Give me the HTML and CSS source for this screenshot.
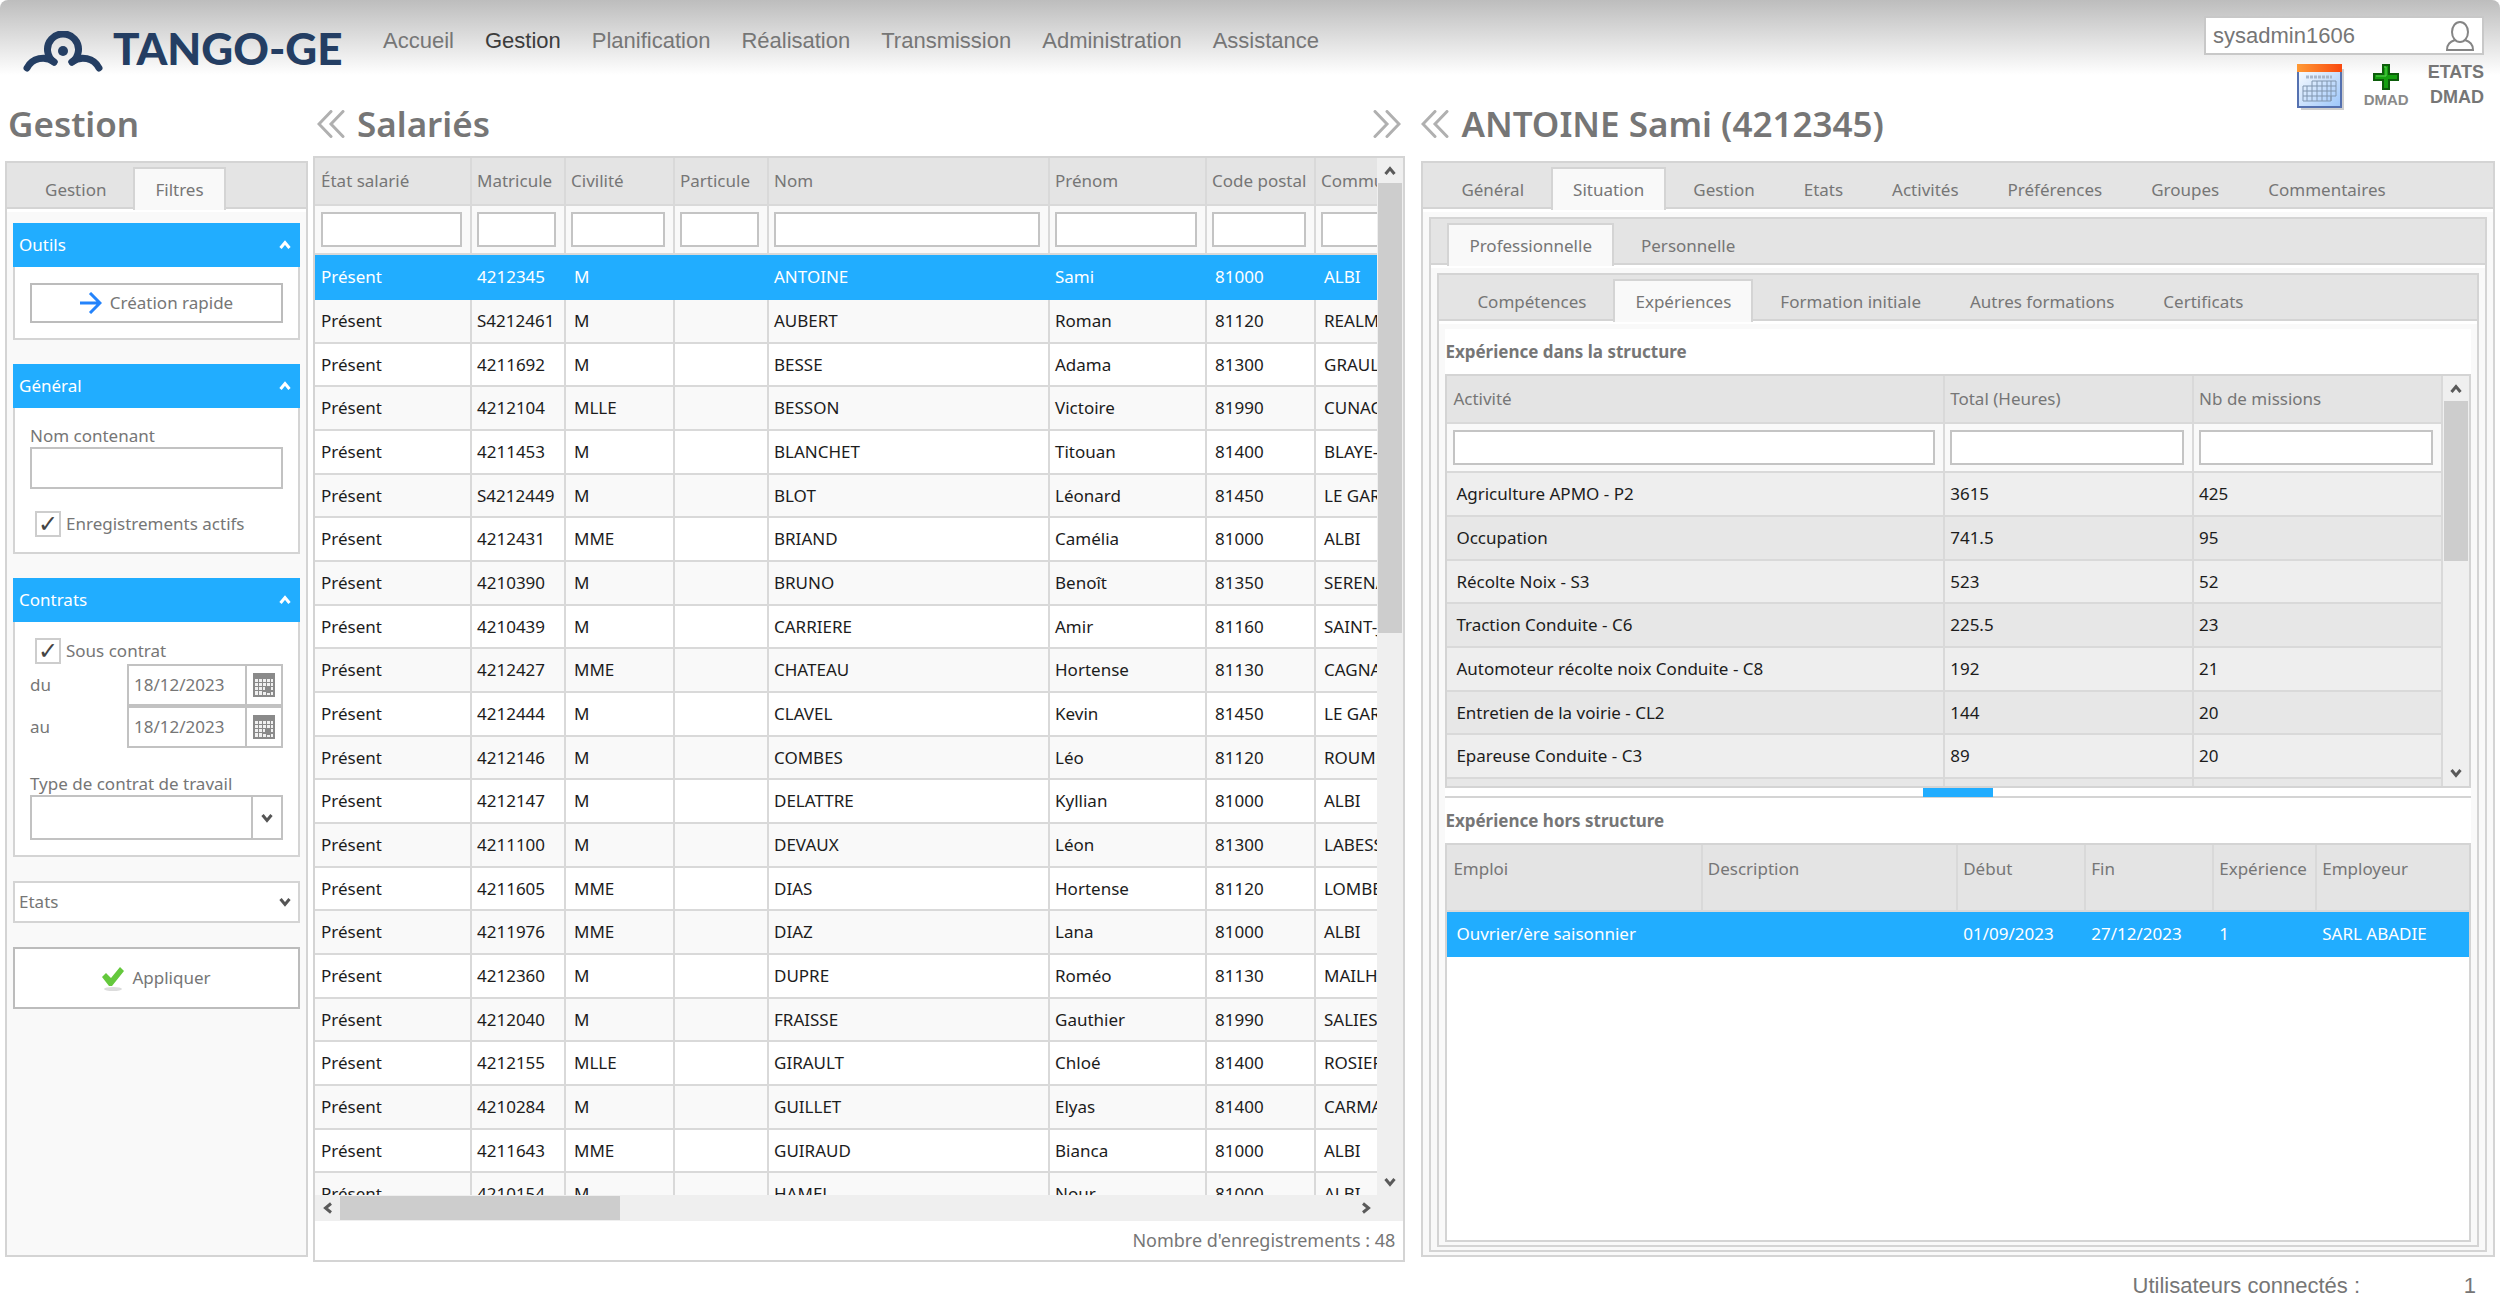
FILE: index.html
```
<!DOCTYPE html>
<html lang="fr">
  <head>
    <meta charset="UTF-8" />
    <meta name="viewport" content="width=device-width, initial-scale=1.0" />
    <title>Tango-GE - Gestion</title>
    <link rel="stylesheet" href="styles.css">
  </head>
  <body>
    <!-- icons used several times -->
    <svg class="sprite" aria-hidden="true">
      <symbol id="up" viewBox="0 0 12 12"><path d="M1.5 9 6 3.5 10.5 9" fill="none" stroke="currentColor" stroke-width="3" /></symbol>
      <symbol id="down" viewBox="0 0 12 12"><path d="M1.5 3 6 8.5 10.5 3" fill="none" stroke="currentColor" stroke-width="3" /></symbol>
      <symbol id="left" viewBox="0 0 12 12"><path d="M9 1.5 3.5 6 9 10.5" fill="none" stroke="currentColor" stroke-width="3" /></symbol>
      <symbol id="right" viewBox="0 0 12 12"><path d="M3 1.5 8.5 6 3 10.5" fill="none" stroke="currentColor" stroke-width="3" /></symbol>
      <symbol id="fold" viewBox="0 0 28 28"><path d="M14 1.5 2 14 14 26.5M26 1.5 14 14 26 26.5" fill="none" stroke="#b0b0b0" stroke-width="3" stroke-linecap="round" /></symbol>
      <symbol id="unfold" viewBox="0 0 28 28"><path d="M2 1.5 14 14 2 26.5M14 1.5 26 14 14 26.5" fill="none" stroke="#b0b0b0" stroke-width="3" stroke-linecap="round" /></symbol>
      <symbol id="cal" viewBox="0 0 22 24">
        <path d="M0 0h22v24H0z" fill="#8a8a8a" />
        <path d="M2 6h3v3H2zM6 6h3v3H6zM10 6h3v3h-3zM14 6h3v3h-3zM18 6h2v3h-2zM2 10h3v3H2zM6 10h3v3H6zM10 10h3v3h-3zM14 10h3v3h-3zM18 10h2v3h-2zM2 14h3v3H2zM6 14h3v3H6zM10 14h2v3h-2zM18 14h2v3h-2zM2 18h3v4H2zM6 18h3v4H6zM10 19h3v3h-3zM14 20h3v2h-3zM18 19h2v3h-2z" fill="#f0f0f0" />
      </symbol>
    </svg>

    <header class="header">
      <a href="#" class="logo">
        <svg width="80" height="41" viewBox="0 0 80 41" fill="none" stroke="#243e63" stroke-width="7" stroke-linecap="round">
          <path d="M4 37A18 18 0 0 1 31 31" />
          <path d="M76 37A18 18 0 0 0 49 31" />
          <path d="M31 31A15.5 15.5 0 1 1 49 31" />
          <circle cx="40" cy="20" r="5" fill="#243e63" stroke="none" />
        </svg>
        <span class="logo-text">TANGO-GE</span>
      </a>
      <nav class="nav">
        <a href="#">Accueil</a>
        <a href="#" class="active">Gestion</a>
        <a href="#">Planification</a>
        <a href="#">Réalisation</a>
        <a href="#">Transmission</a>
        <a href="#">Administration</a>
        <a href="#">Assistance</a>
      </nav>
      <div class="account">
        <button type="button" class="user">
          <span>sysadmin1606</span>
          <svg width="28" height="30" viewBox="0 0 28 30" fill="none" stroke="#858585" stroke-width="2">
            <ellipse cx="14" cy="11" rx="8" ry="10" />
            <path d="M9 19c-5 2-8 4-8 10h26c0-6-3-8-8-10" />
          </svg>
        </button>
        <div class="shortcuts">
          <a href="#" class="shortcut" aria-label="Calendrier">
            <svg width="48" height="46" viewBox="0 0 48 46">
              <defs>
                <linearGradient id="sheet" x2="1" y2="1"><stop stop-color="#fff" /><stop offset="1" stop-color="#9cc6fb" /></linearGradient>
                <linearGradient id="band"><stop stop-color="#ff9a35" /><stop offset="1" stop-color="#f9490f" /></linearGradient>
              </defs>
              <path d="M4 5h43v41H4z" fill="#cfcfcf" />
              <path d="M1 1h43v42H1z" fill="url(#sheet)" stroke="#5571b0" stroke-width="2" />
              <path d="M0 0h45v8H0z" fill="url(#band)" />
              <path d="M9 13h26" stroke="#a9b7cb" stroke-width="3" stroke-dasharray="3 1" />
              <path d="M15 17h24v15h-5v5H6V22h9zM6 27h33M6 32h28M15 22h24M10 22v15M15 22v15M20 17v20M25 17v20M30 17v20M34 17v20" fill="none" stroke="#8095ae" stroke-width="1" />
            </svg>
          </a>
          <a href="#" class="shortcut shortcut-add">
            <svg width="26" height="26" viewBox="0 0 26 26">
              <path d="M10 1h6v9h9v6h-9v9h-6v-9H1v-6h9z" fill="#15a010" stroke="#0d5d0b" stroke-width="2" />
              <path d="M11 3h2v9H3" fill="none" stroke="#5ed257" stroke-width="1" />
            </svg>
            <span>DMAD</span>
          </a>
          <a href="#" class="shortcut-states">ETATS<br>DMAD</a>
        </div>
      </div>
    </header>

    <main class="main">
      <section class="column">
        <h1 class="title">Gestion</h1>
        <div class="panel">
          <div class="tabs">
            <button type="button" class="tab">Gestion</button>
            <button type="button" class="tab active">Filtres</button>
          </div>
          <form class="filters">
            <div class="group">
              <button type="button" class="group-head">Outils <svg class="chevron"><use href="#up" /></svg></button>
              <div class="group-body">
                <button type="button" class="btn">
                  <svg width="22" height="22" viewBox="0 0 22 22" fill="none" stroke="#2483fb" stroke-width="3"><path d="M0 11h19M10 1l10 10-10 10" /></svg>
                  Création rapide
                </button>
              </div>
            </div>

            <div class="group">
              <button type="button" class="group-head">Général <svg class="chevron"><use href="#up" /></svg></button>
              <div class="group-body">
                <label class="label" for="name">Nom contenant</label>
                <input type="text" id="name" class="field" />
                <label class="check check-active"><input type="checkbox" checked />Enregistrements actifs</label>
              </div>
            </div>

            <div class="group">
              <button type="button" class="group-head">Contrats <svg class="chevron"><use href="#up" /></svg></button>
              <div class="group-body">
                <label class="check"><input type="checkbox" checked />Sous contrat</label>
                <div class="date-row">
                  <label for="from">du</label>
                  <div class="date"><input type="text" id="from" value="18/12/2023" /><button type="button" aria-label="Choisir la date"><svg width="22" height="24"><use href="#cal" /></svg></button></div>
                </div>
                <div class="date-row">
                  <label for="to">au</label>
                  <div class="date"><input type="text" id="to" value="18/12/2023" /><button type="button" aria-label="Choisir la date"><svg width="22" height="24"><use href="#cal" /></svg></button></div>
                </div>
                <label class="label label-type" for="type">Type de contrat de travail</label>
                <div class="select">
                  <select id="type"><option></option></select>
                  <span class="select-arrow"><svg class="chevron"><use href="#down" /></svg></span>
                </div>
              </div>
            </div>

            <button type="button" class="group-head group-closed">Etats <svg class="chevron"><use href="#down" /></svg></button>
            <button type="button" class="btn btn-apply">
              <svg width="22" height="26" viewBox="0 0 22 26"><ellipse cx="11" cy="24" rx="9" ry="2" fill="#dcdcdc" /><path d="M0 12l4-4 5 5L18 2l4 4L10 21H7z" fill="#64c83c" /></svg>
              Appliquer
            </button>
          </form>
        </div>
      </section>

      <section class="column column-list">
        <div class="title-bar">
          <button type="button" class="fold" aria-label="Replier"><svg width="28" height="28"><use href="#fold" /></svg></button>
          <h1 class="title">Salariés</h1>
          <button type="button" class="fold fold-right" aria-label="Déplier"><svg width="28" height="28"><use href="#unfold" /></svg></button>
        </div>
        <div class="list">
          <div class="list-view">
            <table class="grid grid-list">
              <colgroup>
                <col class="col-state"><col class="col-number"><col class="col-civility"><col class="col-particle"><col class="col-name"><col class="col-first"><col class="col-zip"><col class="col-city">
              </colgroup>
              <thead>
                <tr><th>État salarié</th><th>Matricule</th><th>Civilité</th><th>Particule</th><th>Nom</th><th>Prénom</th><th>Code postal</th><th>Commune</th></tr>
                <tr class="search">
                  <td><input type="text" aria-label="État salarié" /></td>
                  <td><input type="text" aria-label="Matricule" /></td>
                  <td><input type="text" aria-label="Civilité" /></td>
                  <td><input type="text" aria-label="Particule" /></td>
                  <td><input type="text" aria-label="Nom" /></td>
                  <td><input type="text" aria-label="Prénom" /></td>
                  <td><input type="text" aria-label="Code postal" /></td>
                  <td><input type="text" aria-label="Commune" /></td>
                </tr>
              </thead>
              <tbody>
                <tr class="selected"><td>Présent</td><td>4212345</td><td>M</td><td></td><td>ANTOINE</td><td>Sami</td><td>81000</td><td>ALBI</td></tr>
                <tr><td>Présent</td><td>S4212461</td><td>M</td><td></td><td>AUBERT</td><td>Roman</td><td>81120</td><td>REALMONT</td></tr>
                <tr><td>Présent</td><td>4211692</td><td>M</td><td></td><td>BESSE</td><td>Adama</td><td>81300</td><td>GRAULHET</td></tr>
                <tr><td>Présent</td><td>4212104</td><td>MLLE</td><td></td><td>BESSON</td><td>Victoire</td><td>81990</td><td>CUNAC</td></tr>
                <tr><td>Présent</td><td>4211453</td><td>M</td><td></td><td>BLANCHET</td><td>Titouan</td><td>81400</td><td>BLAYE-LES-MINES</td></tr>
                <tr><td>Présent</td><td>S4212449</td><td>M</td><td></td><td>BLOT</td><td>Léonard</td><td>81450</td><td>LE GARRIC</td></tr>
                <tr><td>Présent</td><td>4212431</td><td>MME</td><td></td><td>BRIAND</td><td>Camélia</td><td>81000</td><td>ALBI</td></tr>
                <tr><td>Présent</td><td>4210390</td><td>M</td><td></td><td>BRUNO</td><td>Benoît</td><td>81350</td><td>SERENAC</td></tr>
                <tr><td>Présent</td><td>4210439</td><td>M</td><td></td><td>CARRIERE</td><td>Amir</td><td>81160</td><td>SAINT-JUERY</td></tr>
                <tr><td>Présent</td><td>4212427</td><td>MME</td><td></td><td>CHATEAU</td><td>Hortense</td><td>81130</td><td>CAGNAC</td></tr>
                <tr><td>Présent</td><td>4212444</td><td>M</td><td></td><td>CLAVEL</td><td>Kevin</td><td>81450</td><td>LE GARRIC</td></tr>
                <tr><td>Présent</td><td>4212146</td><td>M</td><td></td><td>COMBES</td><td>Léo</td><td>81120</td><td>ROUMEGOUX</td></tr>
                <tr><td>Présent</td><td>4212147</td><td>M</td><td></td><td>DELATTRE</td><td>Kyllian</td><td>81000</td><td>ALBI</td></tr>
                <tr><td>Présent</td><td>4211100</td><td>M</td><td></td><td>DEVAUX</td><td>Léon</td><td>81300</td><td>LABESSIERE</td></tr>
                <tr><td>Présent</td><td>4211605</td><td>MME</td><td></td><td>DIAS</td><td>Hortense</td><td>81120</td><td>LOMBERS</td></tr>
                <tr><td>Présent</td><td>4211976</td><td>MME</td><td></td><td>DIAZ</td><td>Lana</td><td>81000</td><td>ALBI</td></tr>
                <tr><td>Présent</td><td>4212360</td><td>M</td><td></td><td>DUPRE</td><td>Roméo</td><td>81130</td><td>MAILHOC</td></tr>
                <tr><td>Présent</td><td>4212040</td><td>M</td><td></td><td>FRAISSE</td><td>Gauthier</td><td>81990</td><td>SALIES</td></tr>
                <tr><td>Présent</td><td>4212155</td><td>MLLE</td><td></td><td>GIRAULT</td><td>Chloé</td><td>81400</td><td>ROSIERES</td></tr>
                <tr><td>Présent</td><td>4210284</td><td>M</td><td></td><td>GUILLET</td><td>Elyas</td><td>81400</td><td>CARMAUX</td></tr>
                <tr><td>Présent</td><td>4211643</td><td>MME</td><td></td><td>GUIRAUD</td><td>Bianca</td><td>81000</td><td>ALBI</td></tr>
                <tr><td>Présent</td><td>4210154</td><td>M</td><td></td><td>HAMEL</td><td>Nour</td><td>81000</td><td>ALBI</td></tr>
              </tbody>
            </table>
          </div>
          <div class="scroll-y">
            <svg class="chevron"><use href="#up" /></svg>
            <div class="scroll-track"><div class="thumb thumb-list"></div></div>
            <svg class="chevron"><use href="#down" /></svg>
          </div>
          <div class="scroll-x">
            <svg class="chevron"><use href="#left" /></svg>
            <div class="scroll-track"><div class="thumb thumb-x"></div></div>
            <svg class="chevron"><use href="#right" /></svg>
          </div>
          <div class="list-count">Nombre d'enregistrements : 48</div>
        </div>
      </section>

      <section class="column column-detail">
        <div class="title-bar">
          <button type="button" class="fold" aria-label="Replier"><svg width="28" height="28"><use href="#fold" /></svg></button>
          <h1 class="title">ANTOINE Sami (4212345)</h1>
        </div>
        <div class="panel">
          <div class="tabs">
            <button type="button" class="tab">Général</button>
            <button type="button" class="tab active">Situation</button>
            <button type="button" class="tab">Gestion</button>
            <button type="button" class="tab">Etats</button>
            <button type="button" class="tab">Activités</button>
            <button type="button" class="tab">Préférences</button>
            <button type="button" class="tab">Groupes</button>
            <button type="button" class="tab">Commentaires</button>
          </div>
          <div class="panel panel-inner">
            <div class="tabs">
              <button type="button" class="tab active">Professionnelle</button>
              <button type="button" class="tab">Personnelle</button>
            </div>
            <div class="panel panel-inner">
              <div class="tabs">
                <button type="button" class="tab">Compétences</button>
                <button type="button" class="tab active">Expériences</button>
                <button type="button" class="tab">Formation initiale</button>
                <button type="button" class="tab">Autres formations</button>
                <button type="button" class="tab">Certificats</button>
              </div>
              <div class="experience">
                <h2 class="subtitle">Expérience dans la structure</h2>
                <div class="activities">
                  <div class="activities-view">
                    <table class="grid grid-activities">
                      <colgroup><col class="col-half"><col class="col-quarter"><col class="col-quarter"></colgroup>
                      <thead>
                        <tr><th>Activité</th><th>Total (Heures)</th><th>Nb de missions</th></tr>
                        <tr class="search">
                          <td><input type="text" aria-label="Activité" /></td>
                          <td><input type="text" aria-label="Total (Heures)" /></td>
                          <td><input type="text" aria-label="Nb de missions" /></td>
                        </tr>
                      </thead>
                      <tbody>
                        <tr><td>Agriculture APMO - P2</td><td>3615</td><td>425</td></tr>
                        <tr><td>Occupation</td><td>741.5</td><td>95</td></tr>
                        <tr><td>Récolte Noix - S3</td><td>523</td><td>52</td></tr>
                        <tr><td>Traction Conduite - C6</td><td>225.5</td><td>23</td></tr>
                        <tr><td>Automoteur récolte noix Conduite - C8</td><td>192</td><td>21</td></tr>
                        <tr><td>Entretien de la voirie - CL2</td><td>144</td><td>20</td></tr>
                        <tr><td>Epareuse Conduite - C3</td><td>89</td><td>20</td></tr>
                        <tr><td></td><td></td><td></td></tr>
                      </tbody>
                    </table>
                  </div>
                  <div class="scroll-y">
                    <svg class="chevron"><use href="#up" /></svg>
                    <div class="scroll-track"><div class="thumb thumb-activities"></div></div>
                    <svg class="chevron"><use href="#down" /></svg>
                  </div>
                </div>
                <div class="splitter"><div class="splitter-handle"></div></div>
                <h2 class="subtitle">Expérience hors structure</h2>
                <div class="jobs">
                  <table class="grid grid-jobs">
                    <colgroup><col class="col-job"><col class="col-job"><col class="col-start"><col class="col-end"><col class="col-years"><col></colgroup>
                    <thead>
                      <tr><th>Emploi</th><th>Description</th><th>Début</th><th>Fin</th><th>Expérience</th><th>Employeur</th></tr>
                    </thead>
                    <tbody>
                      <tr class="selected"><td>Ouvrier/ère saisonnier</td><td></td><td>01/09/2023</td><td>27/12/2023</td><td>1</td><td>SARL ABADIE</td></tr>
                    </tbody>
                  </table>
                </div>
              </div>
            </div>
          </div>
        </div>
      </section>
    </main>

    <footer class="footer">
      <span>Utilisateurs connectés :</span>
      <span class="footer-count">1</span>
    </footer>
  </body>
</html>
```

FILE: styles.css
```
* {
  box-sizing: border-box;
}
body {
  margin: 0;
  height: 100vh;
  display: flex;
  flex-direction: column;
  background: #fff;
  color: #767676;
  font-family: "Noto Sans", "Open Sans", sans-serif;
  font-size: 17px;
  line-height: 24px;
}
h1,
h2 {
  margin: 0;
}
a {
  color: inherit;
  text-decoration: none;
}
button,
input,
select {
  margin: 0;
  padding: 0;
  border: 0;
  background: none;
  color: inherit;
  font: inherit;
}
svg {
  display: block;
  flex: none;
}
.sprite {
  position: absolute;
  width: 0;
  height: 0;
}
.chevron {
  width: 12px;
  height: 12px;
}

/* header */
.header {
  display: flex;
  align-items: flex-start;
  height: 108px;
  flex: none;
  padding: 16px 16px 0 23px;
  border-radius: 8px 8px 0 0;
  background: linear-gradient(#bdbdbd, #fff 75px);
  font-family: "Liberation Sans", Arial, sans-serif;
}
.logo {
  display: flex;
  gap: 10px;
  width: 360px;
  padding-top: 15px;
}
.logo-text {
  color: #243e63;
  font-family: Lato, sans-serif;
  font-size: 44px;
  font-weight: 900;
  line-height: 34px;
}
.nav {
  display: flex;
  gap: 31px;
  padding-top: 13px;
  font-size: 22px;
}
.nav .active {
  color: #3c3c3c;
}
.account {
  width: 280px;
  margin-left: auto;
}
.user {
  display: flex;
  align-items: center;
  justify-content: space-between;
  width: 100%;
  height: 39px;
  padding: 0 8px 0 7px;
  border: 2px solid #c8c8c8;
  background: #fff;
  font-size: 22px;
}
.shortcuts {
  display: flex;
  justify-content: flex-end;
  gap: 19px;
  padding-top: 9px;
  font-weight: bold;
}
.shortcut-add {
  display: flex;
  flex-direction: column;
  align-items: center;
  color: #8a8a8a;
  font-size: 15px;
  line-height: 20px;
}
.shortcut-states {
  margin-top: -4px;
  font-size: 18px;
  line-height: 25px;
  text-align: right;
}

/* three columns */
.main {
  flex: 1;
  min-height: 0;
  display: grid;
  grid-template-columns: 303px minmax(0, 28fr) minmax(0, 27fr);
  padding: 0 5px;
}
.column {
  display: flex;
  flex-direction: column;
  min-height: 0;
}
.column-list {
  margin: 0 16px 0 5px;
}
.title {
  height: 53px;
  padding-left: 3px;
  font-size: 35px;
  font-weight: 600;
  line-height: 32px;
  white-space: nowrap;
}
.title-bar {
  display: flex;
}
.column-list .title-bar {
  height: 48px;
}
.title-bar .title {
  padding-left: 12px;
}
.fold {
  height: 28px;
  margin-top: 2px;
}
.column-list .fold {
  margin-left: 4px;
}
.column-list .fold-right {
  margin: 2px 4px 0 auto;
}

/* panels and tabs */
.panel {
  display: flex;
  flex-direction: column;
  flex: 1;
  min-height: 0;
  margin-bottom: 5px;
  border: 2px solid #d4d4d4;
  background: #f9f9f9;
}
.tabs {
  display: flex;
  flex: none;
  gap: 5px;
  height: 46px;
  padding: 4px 16px 0;
  border-bottom: 2px solid #d4d4d4;
  background: #e4e4e4;
  box-shadow: 0 3px #fff;
}
.tab {
  height: 43px;
  padding: 0 20px;
  border: 2px solid transparent;
  border-bottom: 0;
}
.tab.active {
  position: relative;
  border-color: #d4d4d4;
  background: #f9f9f9;
}
.panel-inner {
  margin: 8px 6px 3px;
}

/* filters */
.filters {
  display: flex;
  flex-direction: column;
  gap: 24px;
  padding: 14px 6px 0;
}
.group-head {
  display: flex;
  align-items: center;
  justify-content: space-between;
  width: 100%;
  height: 44px;
  padding: 0 9px 0 6px;
  background: #21adff;
  color: #fff;
}
.group-closed {
  height: 42px;
  padding: 0 7px 0 4px;
  border: 2px solid #d4d4d4;
  background: #fff;
  color: #767676;
}
.group-closed .chevron,
.select-arrow {
  color: #555;
}
.group-body {
  padding: 16px 15px 15px;
  border: 2px solid #d4d4d4;
  border-top: 0;
  background: #fff;
}
.btn {
  display: flex;
  align-items: center;
  justify-content: center;
  gap: 8px;
  width: 100%;
  height: 40px;
  border: 2px solid #bcbcbc;
  background: #fff;
}
.btn-apply {
  height: 62px;
}
.label {
  display: block;
  line-height: 23px;
}
.field {
  width: 100%;
  height: 42px;
  border: 2px solid #c2c2c2;
}
.check {
  display: flex;
  align-items: center;
  gap: 5px;
  padding-left: 5px;
}
.check-active {
  padding-top: 22px;
}
.check input {
  appearance: none;
  position: relative;
  width: 26px;
  height: 26px;
  border: 2px solid #cdcdcd;
  background: #fff;
}
.check input:checked::after {
  content: "✓";
  position: absolute;
  inset: 0;
  color: #444;
  font: bold 24px/22px "DejaVu Sans", sans-serif;
  text-align: center;
}
.date-row {
  display: flex;
  align-items: center;
  justify-content: space-between;
  height: 42px;
}
.date {
  display: flex;
  width: 156px;
  height: 42px;
  border: 2px solid #c2c2c2;
}
.date input {
  flex: 1;
  min-width: 0;
  padding-left: 5px;
}
.date button {
  padding: 0 6px;
  border-left: 2px solid #c2c2c2;
}
.label-type {
  margin-top: 24px;
}
.select {
  position: relative;
  height: 45px;
  border: 2px solid #c2c2c2;
}
.select select {
  appearance: none;
  width: 100%;
  height: 100%;
}
.select-arrow {
  position: absolute;
  top: 0;
  right: 0;
  bottom: 0;
  display: flex;
  align-items: center;
  padding: 0 8px;
  border-left: 2px solid #c2c2c2;
  pointer-events: none;
}

/* tables */
.grid {
  width: 100%;
  border-spacing: 0;
  table-layout: fixed;
}
.grid th,
.grid td {
  height: inherit;
  padding: 0 0 0 5px;
  border-right: 2px solid #d9d9d9;
  border-bottom: 2px solid #d9d9d9;
  text-align: left;
  white-space: nowrap;
}
.grid tr {
  height: 44px;
}
.grid tbody tr:nth-child(3n) {
  height: 43px;
}
.grid thead tr {
  height: 48px;
}
.grid thead .search {
  height: 49px;
}
.grid th {
  background: #e4e4e4;
  font-weight: normal;
}
.grid .search td {
  padding-right: 8px;
  background: #f9f9f9;
}
.grid td {
  color: #1c1c1c;
}
.grid td:first-child,
.grid th:first-child {
  padding-left: 6px;
}
.search input {
  display: block;
  width: 100%;
  height: 35px;
  border: 2px solid #c4c4c4;
  background: #fff;
}
.grid tbody .selected {
  height: 45px;
}
.grid .selected td {
  border-color: #21adff;
  background: #21adff;
  color: #fff;
}

.list {
  display: grid;
  grid-template: minmax(0, 1fr) 26px 39px / minmax(0, 1fr) 26px;
  flex: 1;
  min-height: 0;
  border: 2px solid #d4d4d4;
}
.list-view {
  overflow: hidden;
}
.grid-list {
  width: 1201px;
}
.grid-list tbody tr:nth-child(even) td {
  background: #f9f9f9;
}
.grid-list tbody td:nth-child(3),
.grid-list tbody td:nth-child(7),
.grid-list tbody td:nth-child(8) {
  padding-left: 8px;
}
.col-state,
.col-first {
  width: 157px;
}
.col-number,
.col-particle {
  width: 94px;
}
.col-civility,
.col-zip {
  width: 109px;
}
.col-name {
  width: 281px;
}
.col-city {
  width: 200px;
}
.scroll-y,
.scroll-x {
  display: flex;
  align-items: center;
  background: #efefef;
  color: #5a5a5a;
}
.scroll-y {
  flex-direction: column;
  padding: 7px 0;
}
.scroll-x {
  grid-column: 1 / -1;
  padding: 0 31px 0 7px;
}
.scroll-track {
  flex: 1;
}
.scroll-y .scroll-track {
  margin: 6px 0;
}
.scroll-x .scroll-track {
  margin: 0 6px;
}
.thumb {
  width: 24px;
  height: 24px;
  background: #cdcdcd;
}
.thumb-list {
  height: 450px;
}
.thumb-x {
  width: 280px;
}
.thumb-activities {
  height: 160px;
}
.list-count {
  grid-column: 1 / -1;
  padding-right: 8px;
  font-size: 18px;
  line-height: 39px;
  text-align: right;
}

/* experiences */
.experience {
  display: flex;
  flex-direction: column;
  flex: 1;
  min-height: 0;
  margin: 8px 6px 3px;
  background: #fff;
}
.subtitle {
  font-size: 17px;
  font-weight: bold;
  line-height: 45px;
}
.activities {
  display: flex;
  flex: none;
  height: 414px;
  border: 2px solid #d4d4d4;
}
.activities-view {
  flex: 1;
  overflow: hidden;
}
.activities .scroll-y {
  width: 26px;
}
.grid-activities tbody td {
  background: #e7e7e7;
}
.grid-activities tbody tr:nth-child(odd) td {
  background: #eee;
}
.grid-activities tbody td:first-child,
.grid-jobs tbody td:first-child {
  padding-left: 9px;
}
.col-half {
  width: 50%;
}
.col-quarter {
  width: 25%;
}
.splitter {
  height: 10px;
  border-bottom: 2px solid #d4d4d4;
}
.splitter-handle {
  width: 70px;
  height: 9px;
  margin: 0 auto;
  background: #21adff;
}
.jobs {
  flex: 1;
  border: 2px solid #d4d4d4;
}
.grid-jobs thead tr {
  height: 67px;
}
.grid-jobs th {
  padding-bottom: 18px;
}
.grid-jobs th:last-child,
.grid-jobs td:last-child {
  border-right: 0;
}
.col-job {
  width: 25%;
}
.col-start,
.col-end {
  width: 128px;
}
.col-years {
  width: 103px;
}

/* footer */
.footer {
  display: flex;
  justify-content: flex-end;
  flex: none;
  height: 47px;
  padding: 12px 24px 0 0;
  font: 22px/24px "Liberation Sans", Arial, sans-serif;
}
.footer-count {
  width: 116px;
  text-align: right;
}
```
